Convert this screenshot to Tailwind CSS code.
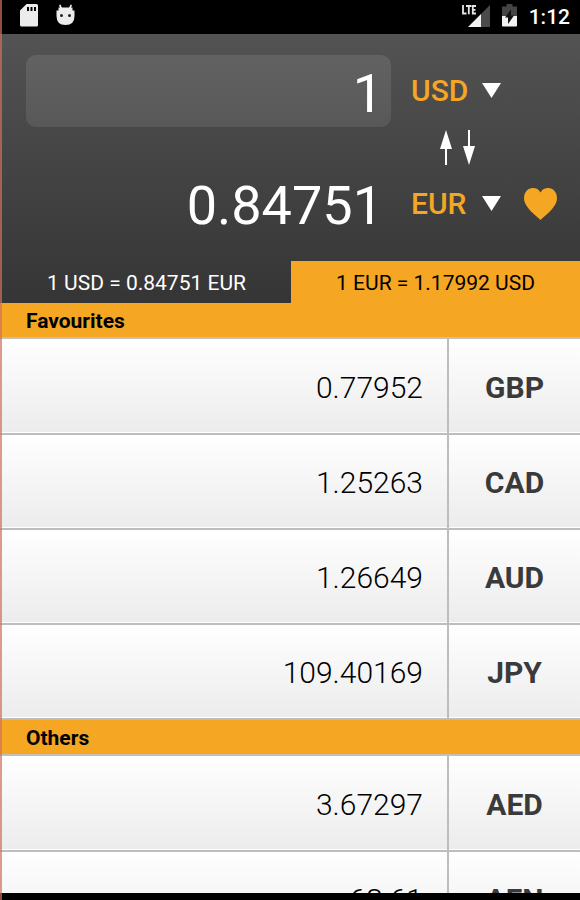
<!DOCTYPE html>
<html lang="en">
<head>
  <meta charset="UTF-8">
  <meta name="viewport" content="width=device-width, initial-scale=1.0">
  <title>Currency Converter</title>
  <script src="https://cdn.jsdelivr.net/npm/@tailwindcss/browser@4"></script>
</head>
<body class="relative h-screen overflow-hidden flex flex-col bg-black font-[Roboto,sans-serif]">

<!-- Status bar -->
<div class="h-[34px] shrink-0 flex items-center justify-between pl-5 pr-2.5 pb-1 bg-black text-white">
  <div class="flex items-center gap-[18px]">
    <svg class="w-[18px] h-[23px]" viewBox="0 0 18 23" aria-hidden="true">
      <path fill="#ececec" fill-rule="evenodd" d="M6.500 0H16.500Q18 0 18 1.500V21Q18 22.500 16.500 22.500H1.500Q0 22.500 0 21V6.500ZM7 3V7H9V3ZM10.500 3V7H12.500V3ZM14 3V7H16V3Z"/>
    </svg>
    <svg class="w-[19px] h-[23px]" viewBox="0 0 19 23" aria-hidden="true">
      <path stroke="#ececec" stroke-width="1.800" stroke-linecap="round" d="M4 1.500L5.500 5M15 1.500L13.500 5"/>
      <path fill="#ececec" d="M2.500 3.500H16.500V6.500H18.500V12Q18.500 21 9.500 21Q.5 21 .5 12V6.500H2.500Z"/>
      <circle cx="5.500" cy="11.500" r="1.500" fill="#222"/>
      <circle cx="13.500" cy="11.500" r="1.500" fill="#222"/>
    </svg>
  </div>
  <div class="flex items-center">
    <svg class="w-[28px] h-[24px] mr-3" viewBox="0 0 28 24" aria-hidden="true">
      <path fill="#4a4a4a" d="M28 2V24H19V11Z"/>
      <path fill="#f2f2f2" d="M19 11V24H6Z"/>
      <path fill="none" stroke="#e6e6e6" stroke-width="1.800" d="M1 2V10.500H4.500M4 3H9.500M6.800 3V11.300M14 3H10.800V10.500H14M10.800 6.800H13.500"/>
    </svg>
    <svg class="w-[15px] h-[23px] mr-3" viewBox="0 0 15 23" aria-hidden="true">
      <path fill="#444" d="M4.500 0H10.500V2.500H15V12H0V2.500H4.500Z"/>
      <path fill="#f2f2f2" d="M0 12H15V21.500Q15 22.500 14 22.500H1Q0 22.500 0 21.500Z"/>
      <path fill="#111" d="M9 5.500V11.500H12L6 20V13.500H3Z"/>
    </svg>
    <span class="pt-1 text-[21px] leading-6 font-medium">1:12</span>
  </div>
</div>

<!-- Converter -->
<header class="shrink-0 bg-linear-to-b from-[#535353] to-[#353535]">
  <form class="grid grid-cols-[1fr_169px] grid-rows-[72px_40px_74px] gap-x-5 pt-[21px] pb-5 pl-[26px]">
    <input type="text" id="amount" value="1" aria-label="Amount" inputmode="decimal"
           class="w-full h-full min-w-0 rounded-[10px] bg-linear-to-b from-[#626262] to-[#585858] pr-2 pt-1 text-right text-[54px] text-white outline-none">
    <div class="relative self-center justify-self-start">
      <select aria-label="From currency" class="block appearance-none w-[90px] h-10 text-[30px] leading-10 font-medium text-[#f5a623] outline-none">
        <option>USD</option>
      </select>
      <svg class="absolute right-0 top-3 w-[19px] h-[15px] pointer-events-none" viewBox="0 0 19 15" fill="#fff"><path d="M0 0H19L9.500 15Z"/></svg>
    </div>

    <button type="button" aria-label="Swap currencies" class="col-start-2 justify-self-start self-center pl-[28px]">
      <svg class="w-[38px] h-[35px]" viewBox="0 0 38 35" fill="#fff">
        <path d="M7 0L13 19H8V35H6V19H1Z"/>
        <path d="M29 0H31V16H36L30 35L24 16H29Z"/>
      </svg>
    </button>

    <output for="amount" class="col-start-1 self-center pt-1 pr-2 text-right text-[54px] leading-[70px] text-white">0.84751</output>
    <div class="flex items-center justify-between pr-[23px]">
      <div class="relative">
        <select aria-label="To currency" class="block appearance-none w-[90px] h-10 text-[30px] leading-10 font-medium text-[#f5a623] outline-none">
          <option>EUR</option>
        </select>
        <svg class="absolute right-0 top-3 w-[19px] h-[15px] pointer-events-none" viewBox="0 0 19 15" fill="#fff"><path d="M0 0H19L9.500 15Z"/></svg>
      </div>
      <button type="button" aria-label="Favourite">
        <svg class="w-[33px] h-[32px]" viewBox="0 0 33 32" fill="#f5a623">
          <path d="M16.500 4.500C19 -.5 25 -1 29 1.500C33 4.500 34 10 32 15C29 21.500 23 26 16.500 32C10 26 4 21.500 1 15C-1 10 0 4.500 4 1.500C8 -1 14 -.5 16.500 4.500Z"/>
        </svg>
      </button>
    </div>
  </form>

  <div class="grid grid-cols-2 h-[42px] pl-0.5 text-[21px]">
    <button type="button" class="pt-1 text-white">1 USD = 0.84751 EUR</button>
    <button type="button" class="pt-1 bg-[#f5a623] text-black">1 EUR = 1.17992 USD</button>
  </div>
</header>

<!-- Rates -->
<main class="flex-1 min-h-0 overflow-hidden bg-white">
  <h2 class="h-9 border-b-2 border-[#c4c0b8] bg-[#f5a623] pl-[26px] text-[21px] leading-[37px] font-bold text-black">Favourites</h2>
  <table class="w-full table-fixed text-[30px] text-black">
    <tbody>
      <tr class="h-[95px] border-b-2 border-[#bdbdbd] bg-linear-to-b from-white to-[#ececec]">
        <td class="pt-0.5 pr-6 text-right font-light">0.77952</td>
        <th scope="row" class="w-[132px] border-l-2 border-[#bdbdbd] pt-0.5 text-center font-bold text-[#3a3a3a]">GBP</th>
      </tr>
      <tr class="h-[95px] border-b-2 border-[#bdbdbd] bg-linear-to-b from-white to-[#ececec]">
        <td class="pt-0.5 pr-6 text-right font-light">1.25263</td>
        <th scope="row" class="border-l-2 border-[#bdbdbd] pt-0.5 text-center font-bold text-[#3a3a3a]">CAD</th>
      </tr>
      <tr class="h-[95px] border-b-2 border-[#bdbdbd] bg-linear-to-b from-white to-[#ececec]">
        <td class="pt-0.5 pr-6 text-right font-light">1.26649</td>
        <th scope="row" class="border-l-2 border-[#bdbdbd] pt-0.5 text-center font-bold text-[#3a3a3a]">AUD</th>
      </tr>
      <tr class="h-[95px] border-b-2 border-[#bdbdbd] bg-linear-to-b from-white to-[#ececec]">
        <td class="pt-0.5 pr-6 text-right font-light">109.40169</td>
        <th scope="row" class="border-l-2 border-[#bdbdbd] pt-0.5 text-center font-bold text-[#3a3a3a]">JPY</th>
      </tr>
    </tbody>
  </table>

  <h2 class="h-9 border-b-2 border-[#c4c0b8] bg-[#f5a623] pl-[26px] text-[21px] leading-[37px] font-bold text-black">Others</h2>
  <table class="w-full table-fixed text-[30px] text-black">
    <tbody>
      <tr class="h-[95px] border-b-2 border-[#bdbdbd] bg-linear-to-b from-white to-[#ececec]">
        <td class="pt-0.5 pr-6 text-right font-light">3.67297</td>
        <th scope="row" class="w-[132px] border-l-2 border-[#bdbdbd] pt-0.5 text-center font-bold text-[#3a3a3a]">AED</th>
      </tr>
      <tr class="h-[95px] border-b-2 border-[#bdbdbd] bg-linear-to-b from-white to-[#ececec]">
        <td class="pt-0.5 pr-6 text-right font-light">68.61</td>
        <th scope="row" class="border-l-2 border-[#bdbdbd] pt-0.5 text-center font-bold text-[#3a3a3a]">AFN</th>
      </tr>
    </tbody>
  </table>
</main>

<!-- Navigation bar edge -->
<div class="h-[7px] shrink-0 bg-black"></div>

<!-- Accent strip along the left side -->
<div class="absolute inset-y-0 left-0 w-0.5 bg-[#d0705a]/70 pointer-events-none"></div>

</body>
</html>
